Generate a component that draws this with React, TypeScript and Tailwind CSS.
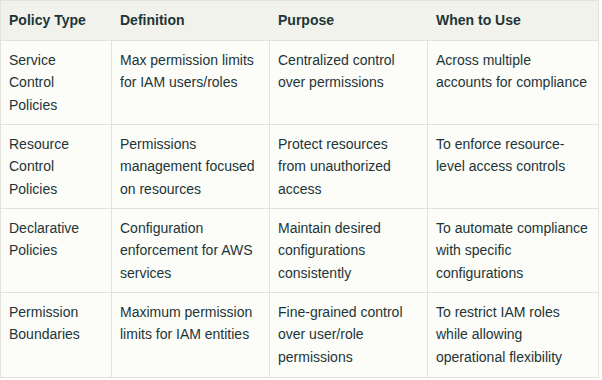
import React from "react";

const headers = ["Policy Type", "Definition", "Purpose", "When to Use"];

// each cell is a list of lines, broken as in the source table
const rows: string[][][] = [
  [
    ["Service", "Control", "Policies"],
    ["Max permission limits", "for IAM users/roles"],
    ["Centralized control", "over permissions"],
    ["Across multiple", "accounts for compliance"],
  ],
  [
    ["Resource", "Control", "Policies"],
    ["Permissions", "management focused", "on resources"],
    ["Protect resources", "from unauthorized", "access"],
    ["To enforce resource-", "level access controls"],
  ],
  [
    ["Declarative", "Policies"],
    ["Configuration", "enforcement for AWS", "services"],
    ["Maintain desired", "configurations", "consistently"],
    ["To automate compliance", "with specific", "configurations"],
  ],
  [
    ["Permission", "Boundaries"],
    ["Maximum permission", "limits for IAM entities"],
    ["Fine-grained control", "over user/role", "permissions"],
    ["To restrict IAM roles", "while allowing", "operational flexibility"],
  ],
];

export default function App() {
  return (
    <div className="w-[602px] h-[380px] bg-white" style={{ fontFamily: '"Liberation Sans", Arial, sans-serif' }}>
      <div className="w-[599px] border border-[#e3e3dc] bg-[#fcfcf8] text-[14px] leading-[22.4px] text-[#1d3537]">
        <div className="grid grid-cols-[111px_158px_158px_170px] bg-[#f2f2ed] border-b border-[#e3e3dc] h-[40px]">
          {headers.map((h, i) => (
            <div key={h} className={`px-2 pt-2 font-bold whitespace-nowrap ${i < 3 ? "border-r border-[#f2f2ed]" : ""}`}>
              {h}
            </div>
          ))}
        </div>
        {rows.map((row, r) => (
          <div
            key={r}
            className={`grid grid-cols-[111px_158px_158px_170px] h-[84px] ${r < rows.length - 1 ? "border-b border-[#e3e3dc]" : ""}`}
          >
            {row.map((cell, c) => (
              <div key={c} className={`px-2 pt-2 whitespace-nowrap ${c < 3 ? "border-r border-[#e3e3dc]" : ""}`}>
                {cell.map((line) => (
                  <div key={line}>{line}</div>
                ))}
              </div>
            ))}
          </div>
        ))}
      </div>
    </div>
  );
}
